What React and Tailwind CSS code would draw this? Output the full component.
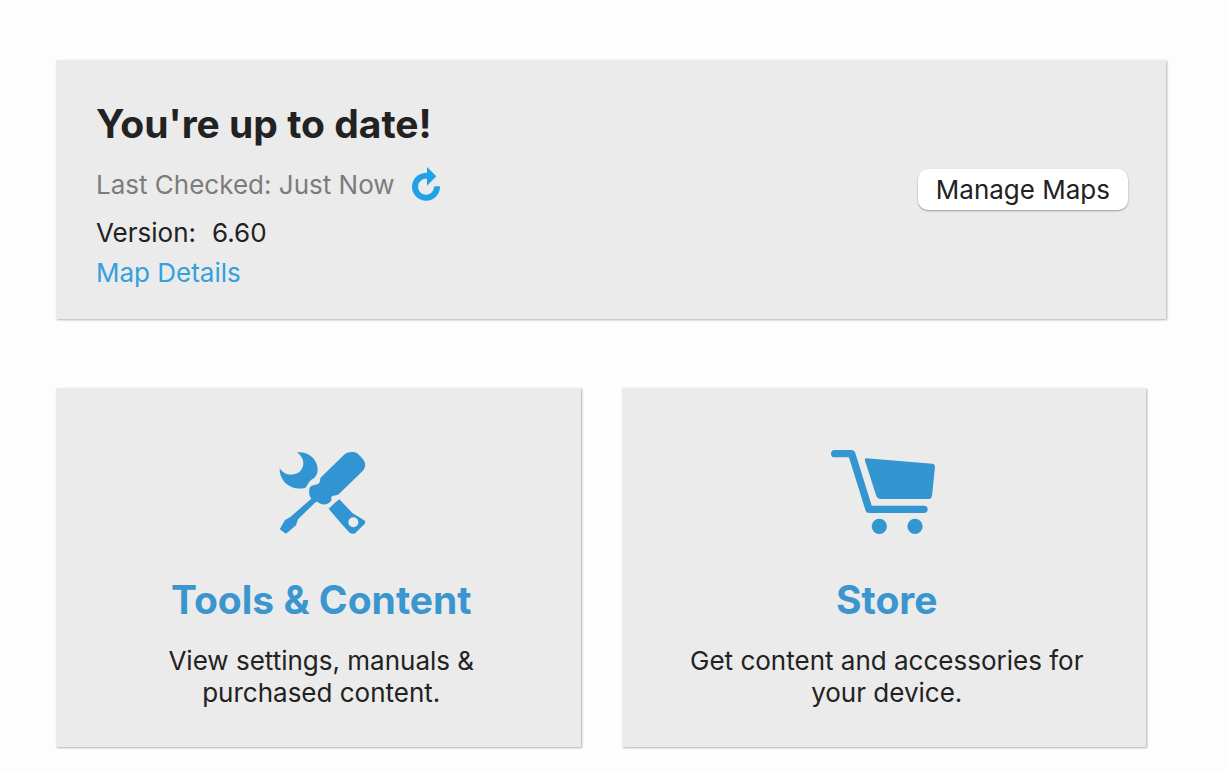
import React, { useState } from "react";

const ToolsIcon = () => (
  <svg className="h-[105px] w-[105px]" viewBox="-4 0 315 315" fill="#3095d2" aria-hidden="true">
    {/* wrench head */}
    <path d="M80 37C105 34 130 48 138 70C143 82 143 92 140 101L133 113C122 118 114 126 110 137L105 143C85 149 62 145 46 130C33 117 27 102 28 85C36 97 48 104 62 104C84 104 99 90 99 70C99 56 91 46 80 37Z" />
    {/* screwdriver */}
    <path d="M223 43C233 34 251 34 261 40L275 54C287 66 288 82 277 93L205 163C199 168 188 165 183 171C181 178 187 179 178 187C168 197 154 194 146 189C142 184 138 184 134 188L83 238L77 256L47 281L28 268L44 240L60 231L123 176C115 166 115 150 119 142C124 134 134 136 144 131C152 127 147 117 152 112Z" />
    {/* wrench handle */}
    <path fillRule="evenodd" d="M175 206L194 188L207 178L215 186L246 219L280 240C286 244 286 248 282 253L255 279C250 283 243 282 238 278L217 256ZM249 232A15 15 0 1 0 249 262A15 15 0 1 0 249 232Z" />
  </svg>
);

const CartIcon = () => (
  <svg className="h-[105px] w-[125px]" viewBox="12 0 375 315" fill="#3396d1" aria-hidden="true">
    <path d="M44 41H95L147 208H312" fill="none" stroke="#3396d1" strokeWidth="22" strokeLinecap="round" strokeLinejoin="round" />
    <path d="M140 55L337 71Q345 72 345 81L336 167Q334 177 324 177H182Q173 177 169 168L135 62Q133 55 140 55Z" />
    <circle cx="178" cy="259" r="23" />
    <circle cx="285" cy="259" r="23" />
  </svg>
);

const RefreshIcon = () => (
  <svg className="h-[50px] w-[55px]" viewBox="0 0 165 150" aria-hidden="true">
    <path d="M114 79A33 33 0 1 1 88 48" fill="none" stroke="#22a2e6" strokeWidth="18" />
    <path d="M84 21L112 49L84 77Z" fill="#22a2e6" />
  </svg>
);

const Tile = ({ icon, title, desc }) => {
  return (
    <a
      href="#"
      className="flex flex-1 flex-col items-center bg-[#ebebeb] pt-[52px] pr-8 pb-[38px] pl-[38px] text-center shadow-[1px_1px_2px_rgba(0,0,0,0.3)]"
    >
      {icon}
      <h2 className="mt-[31px] text-[39px] leading-[48px] font-bold text-[#3b96cf]">{title}</h2>
      <p className="mt-[21px] max-w-[420px] text-[26px] leading-8">{desc}</p>
    </a>
  );
};

const App = () => {
  const [checked, setChecked] = useState("Just Now");

  return (
    <div className="min-h-screen bg-[#fdfdfd] pt-[60px] pr-[60px] pb-6 pl-14 font-['Inter',sans-serif] text-[#222222]">
      <section className="flex items-center justify-between bg-[#ebebeb] pr-[38px] pl-10 shadow-[1px_1px_2px_rgba(0,0,0,0.3)]">
        <div className="pt-10 pb-[26px] text-[26px] leading-10">
          <h1 className="text-[39px] leading-[48px] font-bold">You're up to date!</h1>
          <div className="mt-3 flex items-center text-[#7c7c7c]">
            <p>Last Checked: {checked}</p>
            <button type="button" aria-label="Check again" className="ml-1 cursor-pointer" onClick={() => setChecked("Just Now")}>
              <RefreshIcon />
            </button>
          </div>
          <p className="mt-[3px] flex gap-4">
            <span>Version:</span>
            <span>6.60</span>
          </p>
          <a href="#" className="block text-[#34a0de]">Map Details</a>
        </div>
        <button
          type="button"
          className="h-[41px] cursor-pointer rounded-[10px] bg-white px-[18px] text-[26px] leading-10 shadow-[0_1px_2px_rgba(0,0,0,0.35)]"
        >
          Manage Maps
        </button>
      </section>

      <div className="mt-[69px] mr-5 flex gap-[41px]">
        <Tile icon={<ToolsIcon />} title="Tools & Content" desc="View settings, manuals & purchased content." />
        <Tile icon={<CartIcon />} title="Store" desc="Get content and accessories for your device." />
      </div>
    </div>
  );
};

export default App;
